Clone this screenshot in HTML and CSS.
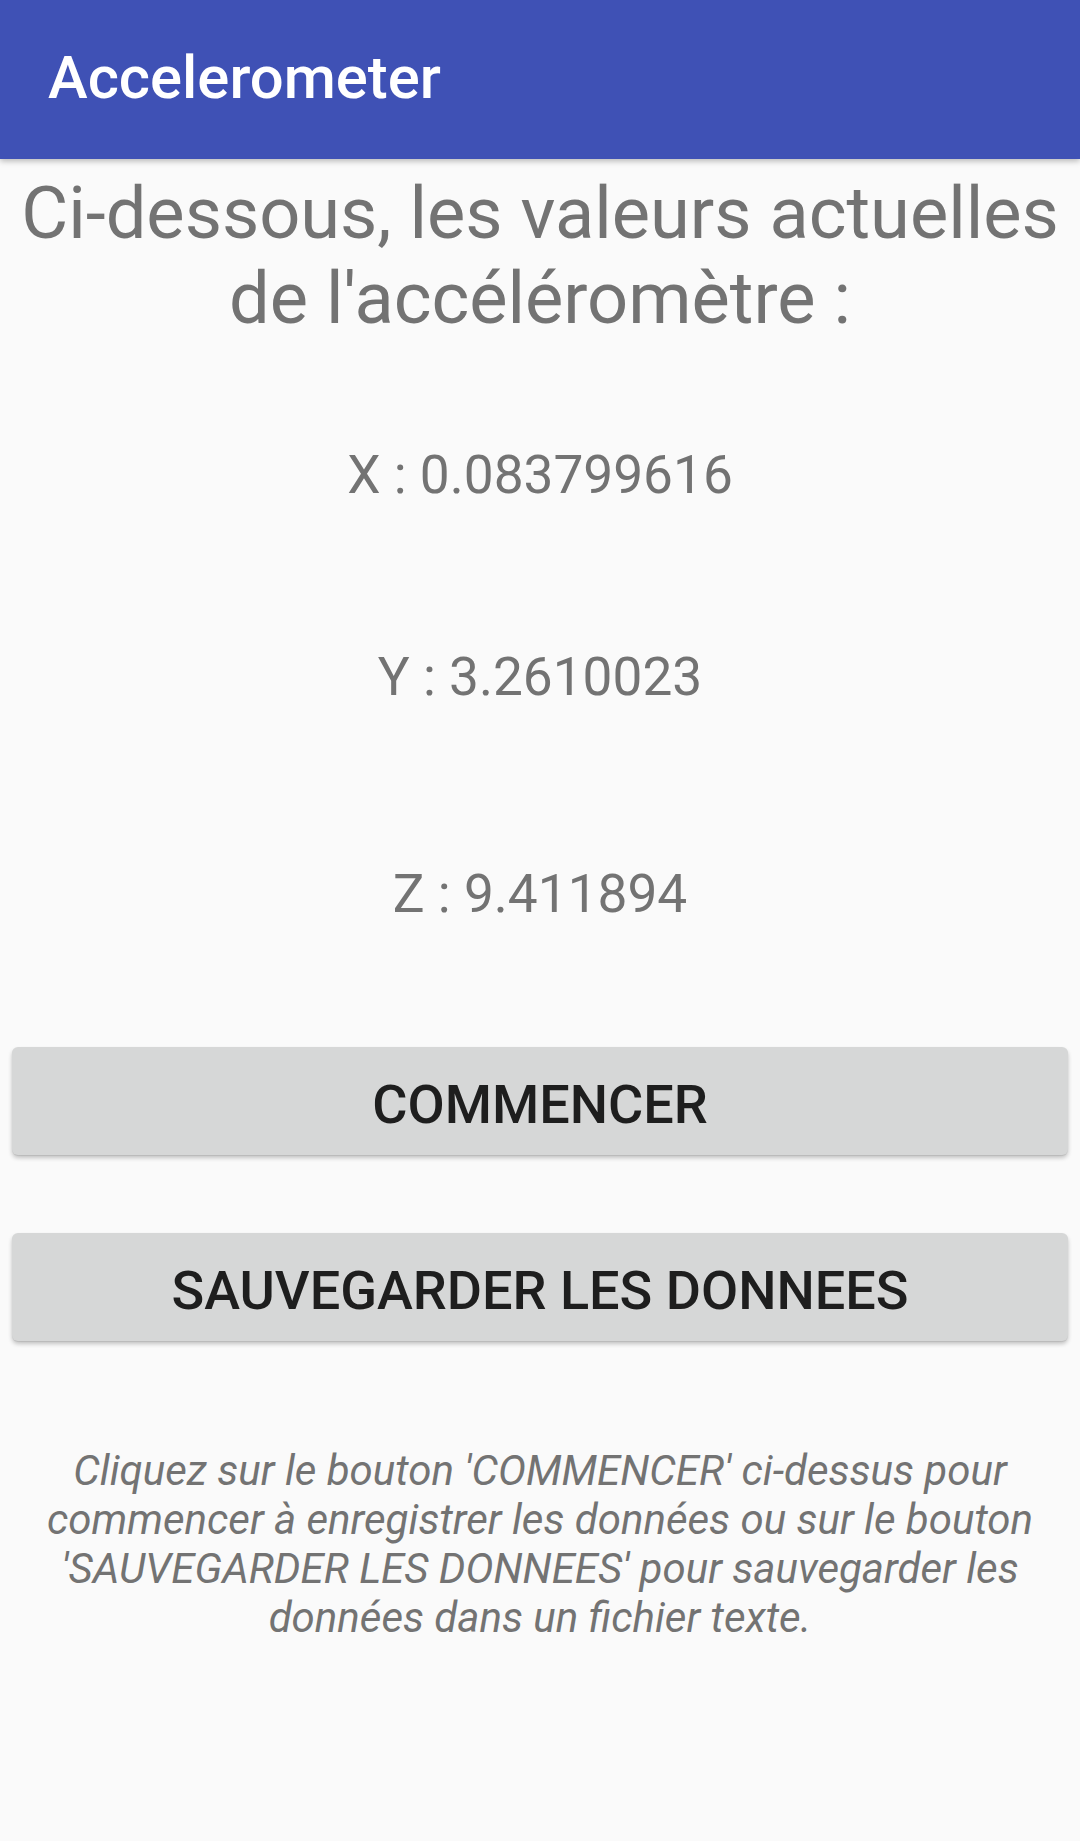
FILE: index.html
```html
<!DOCTYPE html>
<html lang="fr">
<head>
<meta charset="utf-8">
<title>Accelerometer</title>
<link rel="stylesheet" href="styles.css">
</head>
<body>
<div class="app">
  <header class="toolbar">
    <h1 class="toolbar-title">Accelerometer</h1>
  </header>
  <main class="content">
    <h2 class="intro">Ci-dessous, les valeurs actuelles<br>de l'accéléromètre :</h2>
    <p class="value value-x">X : 0.083799616</p>
    <p class="value value-y">Y : 3.2610023</p>
    <p class="value value-z">Z : 9.411894</p>
    <button class="btn btn-start" type="button">COMMENCER</button>
    <button class="btn btn-save" type="button">SAUVEGARDER LES DONNEES</button>
    <p class="help">Cliquez sur le bouton 'COMMENCER' ci-dessus pour<br>commencer à enregistrer les données ou sur le bouton<br>'SAUVEGARDER LES DONNEES' pour sauvegarder les<br>données dans un fichier texte.</p>
  </main>
</div>
</body>
</html>
```

FILE: styles.css
```css
* {
  box-sizing: border-box;
}

html, body {
  margin: 0;
  padding: 0;
  background: #fafafa;
}

body {
  font-family: Roboto, "Noto Sans", "Liberation Sans", sans-serif;
  width: 1080px;
  height: 1841px;
  overflow: hidden;
}

.app {
  display: flex;
  flex-direction: column;
  min-height: 1841px;
  background: #fafafa;
}

.toolbar {
  position: relative;
  z-index: 2;
  height: 159px;
  background: #3f51b5;
  display: flex;
  align-items: center;
  padding-left: 48px;
  box-shadow: 0 2px 6px rgba(0, 0, 0, 0.28);
}

.toolbar-title {
  margin: 0;
  margin-top: -2px;
  color: #ffffff;
  font-size: 59.8px;
  font-weight: 500;
  line-height: 1;
}

.content {
  display: flex;
  flex-direction: column;
  align-items: stretch;
  padding: 0 12px;
}

.intro {
  margin: 12px 0 0;
  font-size: 72.2px;
  font-weight: 400;
  line-height: 85px;
  color: #737373;
  text-align: center;
  white-space: nowrap;
}

.value {
  margin: 0;
  font-size: 53.2px;
  line-height: 62px;
  color: #737373;
  text-align: center;
}

.value-x {
  margin-top: 103px;
}

.value-y {
  margin-top: 140px;
}

.value-z {
  margin-top: 155px;
}

.btn {
  display: flex;
  align-items: center;
  justify-content: center;
  width: 100%;
  height: 108px;
  border: 0;
  border-radius: 6px;
  background: #d6d7d7;
  color: #1e1e1e;
  font-family: Roboto, "Noto Sans", "Liberation Sans", sans-serif;
  font-size: 54px;
  font-weight: 500;
  padding: 6px 0 0;
  box-shadow: 0 3px 4px rgba(0, 0, 0, 0.22), 0 1px 1px rgba(0, 0, 0, 0.08);
}

.btn-start {
  margin-top: 122px;
}

.btn-save {
  margin-top: 78px;
}

.help {
  margin: 105px 0 0;
  font-size: 42px;
  font-style: italic;
  line-height: 49px;
  color: #737373;
  text-align: center;
  white-space: nowrap;
}
```
